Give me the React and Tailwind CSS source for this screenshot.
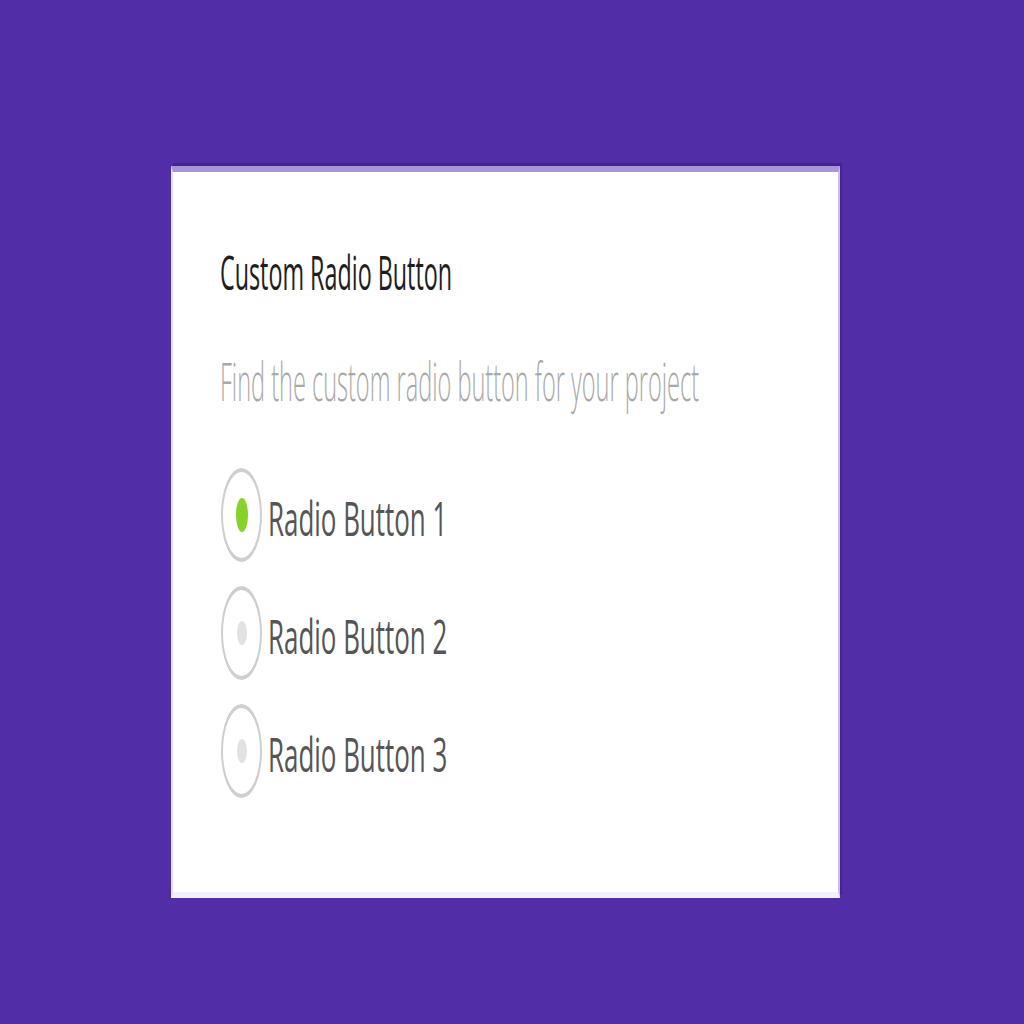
import React from "react";

function Radio({ label, checked }) {
  return (
    <div className="flex items-center h-[94px]">
      <div className="w-[41px] h-[94px] rounded-[50%] border-x-2 border-y-[4px] border-[#cfcfcf] flex items-center justify-center shrink-0">
        <div
          className={
            checked
              ? "w-[12px] h-[34px] rounded-[50%] bg-[#86d12a]"
              : "w-[10px] h-[24px] rounded-[50%] bg-[#e2e2e2]"
          }
        />
      </div>
      <div className="ml-[6px] pt-[6px] w-[200px] overflow-visible">
        <span className="inline-block origin-left scale-x-[0.54] whitespace-nowrap text-[48px] leading-none text-[#555555] [font-family:'Open_Sans',sans-serif]">
          {label}
        </span>
      </div>
    </div>
  );
}

export default function App() {
  return (
    <div className="w-[1024px] h-[1024px] bg-[#512da8] overflow-hidden pt-[166px] pl-[171px]">
      <div className="w-[669px] h-[732px] bg-white border-t-[6px] border-t-[#a994d9] border-l-2 border-l-[#e4ddf6] border-r-2 border-r-[#cbbfea] border-b-[6px] border-b-[#f2eefb] shadow-[2px_-3px_0_#43258f] pl-[48px] pt-[76px] flex flex-col">
        <div className="h-[48px] w-[400px] -ml-[1px]">
          <span className="inline-block origin-left scale-x-[0.486] whitespace-nowrap text-[48px] leading-none text-[#1e1e1e] [font-family:'Open_Sans',sans-serif]">
            Custom Radio Button
          </span>
        </div>
        <div className="mt-[58px] h-[53px] w-[560px] -ml-[1px]">
          <span className="inline-block origin-left scale-x-[0.444] whitespace-nowrap text-[53px] leading-none font-light text-[#a9a9a9] [font-family:'Open_Sans',sans-serif]">
            Find the custom radio button for your project
          </span>
        </div>
        <div className="mt-[61px] flex flex-col gap-[24px]">
          <Radio label="Radio Button 1" checked />
          <Radio label="Radio Button 2" />
          <Radio label="Radio Button 3" />
        </div>
      </div>
    </div>
  );
}
